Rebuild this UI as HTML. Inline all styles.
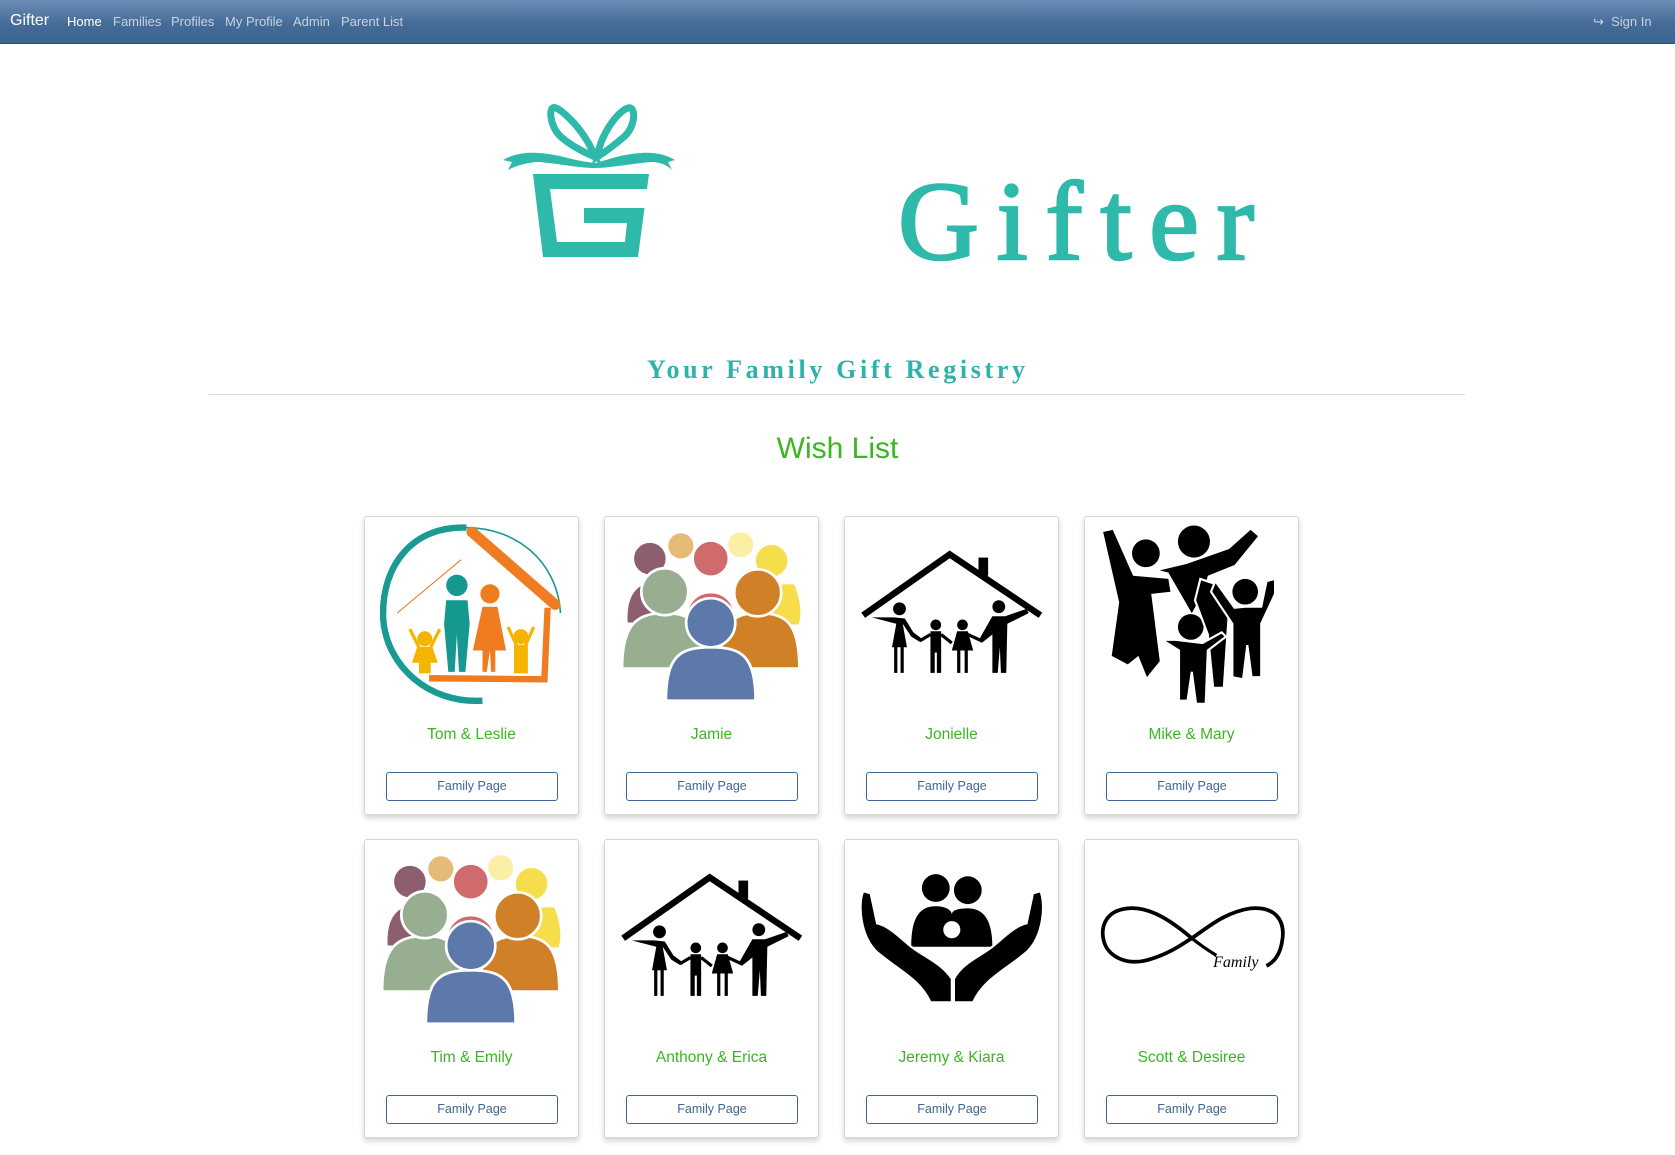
<!DOCTYPE html>
<html><head><meta charset="utf-8"><style>
*{box-sizing:border-box;margin:0;padding:0}
body{width:1675px;height:1155px;background:#fff;font-family:"Liberation Sans",sans-serif;position:relative;overflow:hidden}
.nav{position:absolute;left:0;top:0;width:1675px;height:44px;background:linear-gradient(#6c8db5,#456c98 55%,#3d6390);border-bottom:1px solid #2d4e78}
.nav span{position:absolute;top:14px;font-size:13px;color:#c7d3e2}
.brand{left:10px!important;top:12px!important;font-size:16px!important;color:#fff!important}
.card{position:absolute;width:215px;height:299px;border:1px solid #d6d6d6;border-radius:3px;background:#fff;box-shadow:0 3px 6px rgba(0,0,0,.18)}
.card svg{position:absolute;left:0;top:0}
.name{position:absolute;left:0;width:100%;top:209px;text-align:center;color:#3cb523;font-size:15.5px}
.btn{position:absolute;left:21px;top:255px;width:172px;height:29px;border:1px solid #3f6696;border-radius:3px;text-align:center;line-height:27px;font-size:12.5px;color:#3f6696}
</style></head><body>
<div class="nav">
<span class="brand">Gifter</span>
<span style="left:67px;color:#fff">Home</span>
<span style="left:113px">Families</span>
<span style="left:171px">Profiles</span>
<span style="left:225px">My Profile</span>
<span style="left:293px">Admin</span>
<span style="left:341px">Parent List</span>
<span style="left:1593px">&#8618;&nbsp; Sign In</span>
</div>

<svg style="position:absolute;left:0;top:0" width="1675" height="400">
<g fill="#2eb9ab">
<path d="M595 157 C585 130 562 110 556 108 C548 104 549 125 560 136 C572 147 588 154 595 157Z" fill="none" stroke="#2eb9ab" stroke-width="7"/>
<path d="M597 157 C602 130 620 110 628 108 C636 106 636 125 625 136 C612 147 602 154 597 157Z" fill="none" stroke="#2eb9ab" stroke-width="7"/>
<path d="M503 160 C520 150 540 152 560 156 C575 160 585 162 595 163 L595 168 C580 168 560 164 540 162 C528 162 515 166 508 170 L512 162 Z"/>
<path d="M675 160 C658 150 640 152 620 156 C605 160 600 162 595 163 L595 168 C610 168 630 164 650 162 C662 162 668 166 672 170 L668 162 Z"/>
<path fill-rule="evenodd" d="M533 174 L649 174 L638 257 L543 257 Z M550 189 L647 189 L644.5 208 L584 208 L584 223 L627 223 L625 242 L557 242 Z"/>
</g>
<text x="898" y="259" font-family="Liberation Serif,serif" font-size="112" fill="#2eb9ab" stroke="#2eb9ab" stroke-width="2.5" textLength="356" lengthAdjust="spacing">Gifter</text>
<text x="647" y="378" font-family="Liberation Serif,serif" font-size="26" font-weight="bold" fill="#2eb3aa" textLength="378" lengthAdjust="spacing">Your Family Gift Registry</text>
</svg>
<div style="position:absolute;left:209px;top:394px;width:1256px;height:1px;background:#dcdcdc"></div>
<div style="position:absolute;left:0;width:1675px;top:432px;text-align:center;font-size:30px;color:#3cb523">Wish List</div>

<!-- Row 1 -->
<div class="card" style="left:364px;top:516px">
<svg width="215" height="200" viewBox="0 0 201.3 187.3">
<path d="M95 10 C45 8 15 45 17 95 C20 140 60 175 110 172" fill="none" stroke="#1a9a92" stroke-width="6"/>
<path d="M95 10 C140 10 180 40 183 90" fill="none" stroke="#1a9a92" stroke-width="1.5"/>
<path d="M100 14 L178 82" stroke="#ef7c21" stroke-width="10" stroke-linecap="round"/>
<path d="M171 85 L168 152 L60 151" fill="none" stroke="#ef7c21" stroke-width="6"/>
<path d="M30 90 L90 40" stroke="#ef7c21" stroke-width="1"/>
<circle cx="86" cy="64" r="10" fill="#159890"/><path d="M76 78 L96 78 L98 100 L94 145 L88 145 L86 110 L84 145 L78 145 L74 100Z" fill="#159890"/>
<circle cx="117" cy="72" r="9" fill="#ef7c21"/><path d="M110 84 L124 84 L132 125 L122 125 L122 145 L118 145 L117 125 L114 145 L110 145 L110 125 L101 125Z" fill="#ef7c21"/>
<circle cx="56" cy="114" r="7" fill="#f4b400"/><path d="M50 123 L62 123 L66 135 L60 135 L60 145 L52 145 L52 135 L46 135Z M42 105 L52 125 M70 105 L60 125" fill="#f4b400" stroke="#f4b400" stroke-width="3"/>
<circle cx="146" cy="112" r="7" fill="#f4b400"/><path d="M141 121 L151 121 L151 145 L141 145Z M134 103 L143 123 M158 103 L149 123" fill="#f4b400" stroke="#f4b400" stroke-width="3"/>
</svg>
<div class="name">Tom &amp; Leslie</div><div class="btn">Family Page</div></div>

<div class="card" style="left:604px;top:516px">
<svg width="215" height="200" viewBox="0 0 201.3 187.3">
<g id="crowd" stroke="#fff" stroke-width="2.5">
<path d="M20 100 C18 70 30 58 60 56 L60 100Z" fill="#8c5e70"/>
<path d="M140 100 C140 70 150 60 178 62 C186 80 185 95 182 102Z" fill="#f5dd4c"/>
<circle cx="42" cy="39" r="16" fill="#8c5e70"/>
<circle cx="71" cy="27" r="13" fill="#e6bb77"/>
<circle cx="156" cy="41" r="16" fill="#f5dd4c"/>
<circle cx="127" cy="26" r="13" fill="#fbeea5"/>
<path d="M76 95 C76 62 122 62 122 95Z" fill="#cf6a6d"/>
<circle cx="99" cy="39" r="17" fill="#cf6a6d"/>
<path d="M16 142 C16 100 30 90 56 90 C82 90 92 100 92 142Z" fill="#97ae91"/>
<circle cx="56" cy="70" r="22" fill="#97ae91"/>
<path d="M108 142 C108 100 118 90 144 90 C170 90 182 100 182 142Z" fill="#d08128"/>
<circle cx="143" cy="71" r="22" fill="#d08128"/>
<path d="M57 172 C57 130 70 122 99 122 C128 122 141 130 141 172Z" fill="#5d78ab"/>
<circle cx="99" cy="99" r="23" fill="#5d78ab"/>
</g></svg>
<div class="name">Jamie</div><div class="btn">Family Page</div></div>

<div class="card" style="left:844px;top:516px">
<svg width="215" height="200" viewBox="0 0 201.3 187.3">
<g id="hs">
<path d="M17 92 L98 35 L183 92" fill="none" stroke="#000" stroke-width="6"/>
<rect x="125" y="38" width="9" height="17"/>
<circle cx="51" cy="86" r="6"/><path d="M25 94 L48 100 L44 122 L58 122 L54 100 L62 112 L70 117 L72 114 L64 108 L56 95 L46 94Z"/><rect x="46" y="121" width="3" height="25"/><rect x="52" y="121" width="3" height="25"/>
<circle cx="85" cy="101" r="5"/><rect x="80" y="107" width="10" height="20"/><rect x="80" y="125" width="4" height="21"/><rect x="86" y="125" width="4" height="21"/><path d="M70 116 L80 110 M90 110 L100 118" stroke="#000" stroke-width="3"/>
<circle cx="110" cy="101" r="5"/><path d="M105 107 L115 107 L120 125 L100 125Z"/><rect x="105" y="124" width="3" height="22"/><rect x="112" y="124" width="3" height="22"/><path d="M115 110 L128 116" stroke="#000" stroke-width="3"/>
<circle cx="144" cy="84" r="6"/><path d="M138 93 L150 93 L170 86 L172 90 L152 100 L151 146 L146 146 L145 122 L143 146 L138 146 L138 110 L128 118 L126 114Z"/>
</g></svg>
<div class="name">Jonielle</div><div class="btn">Family Page</div></div>

<div class="card" style="left:1084px;top:516px">
<svg width="215" height="200" viewBox="0 0 201.3 187.3">
<circle cx="57" cy="34" r="13"/><circle cx="102" cy="23" r="15"/><circle cx="150" cy="70" r="12"/><circle cx="99" cy="103" r="12"/>
<path d="M17 14 L26 12 L45 55 L78 58 L80 70 L62 72 L70 135 L58 150 L50 130 L40 138 L25 130 L32 80Z"/>
<path d="M70 50 L95 44 L135 30 L155 12 L162 18 L140 45 L115 55 L110 72 L100 90 L78 52Z"/>
<path d="M108 58 L120 62 L135 85 L130 160 L120 160 L115 110 L103 78Z" stroke="#fff" stroke-width="2"/>
<path d="M122 60 L140 85 L150 84 L165 84 L170 60 L178 58 L178 72 L165 100 L165 150 L156 150 L152 120 L148 152 L138 150 L138 100 L118 70Z" stroke="#fff" stroke-width="2"/>
<path d="M72 115 L85 115 L110 118 L128 108 L132 112 L115 125 L113 175 L104 175 L100 145 L96 172 L88 172 L88 125Z" stroke="#fff" stroke-width="2"/>
</svg>
<div class="name">Mike &amp; Mary</div><div class="btn">Family Page</div></div>

<!-- Row 2 -->
<div class="card" style="left:364px;top:839px">
<svg width="215" height="200" viewBox="0 0 201.3 187.3"><use href="#crowd"/></svg>
<div class="name">Tim &amp; Emily</div><div class="btn">Family Page</div></div>

<div class="card" style="left:604px;top:839px">
<svg width="215" height="200" viewBox="0 0 201.3 187.3"><use href="#hs"/></svg>
<div class="name">Anthony &amp; Erica</div><div class="btn">Family Page</div></div>

<div class="card" style="left:844px;top:839px">
<svg width="215" height="200" viewBox="0 0 201.3 187.3">
<circle cx="85" cy="45" r="13"/><circle cx="115" cy="47" r="13"/>
<path d="M62 100 C62 72 70 62 85 62 C95 62 100 66 100 70 C100 66 105 64 115 64 C130 64 138 75 138 100Z"/>
<circle cx="100" cy="84" r="8" fill="#fff"/>
<path d="M17 48 C12 60 14 90 30 105 C50 122 70 130 80 152 L100 152 L100 130 C90 115 75 110 62 100 C50 90 40 80 30 78 L24 50Z" stroke="#fff" stroke-width="2"/>
<path d="M183 48 C188 60 186 90 170 105 C150 122 130 130 120 152 L102 152 L102 130 C110 115 125 110 138 100 C150 90 160 80 170 78 L176 50Z" stroke="#fff" stroke-width="2"/>
</svg>
<div class="name">Jeremy &amp; Kiara</div><div class="btn">Family Page</div></div>

<div class="card" style="left:1084px;top:839px">
<svg width="215" height="200" viewBox="0 0 201.3 187.3">
<path d="M100 92 C80 75 60 62 40 64 C20 66 15 80 17 92 C20 110 40 118 60 112 C80 106 90 98 100 92 C115 82 130 68 155 64 C178 62 187 75 185 92 C183 110 175 115 170 118" fill="none" stroke="#000" stroke-width="3.5"/>
<path d="M100 92 C110 100 118 105 123 108" fill="none" stroke="#000" stroke-width="3"/>
<text x="120" y="119" font-family="Liberation Serif,serif" font-style="italic" font-size="15">Family</text>
</svg>
<div class="name">Scott &amp; Desiree</div><div class="btn">Family Page</div></div>
</body></html>
